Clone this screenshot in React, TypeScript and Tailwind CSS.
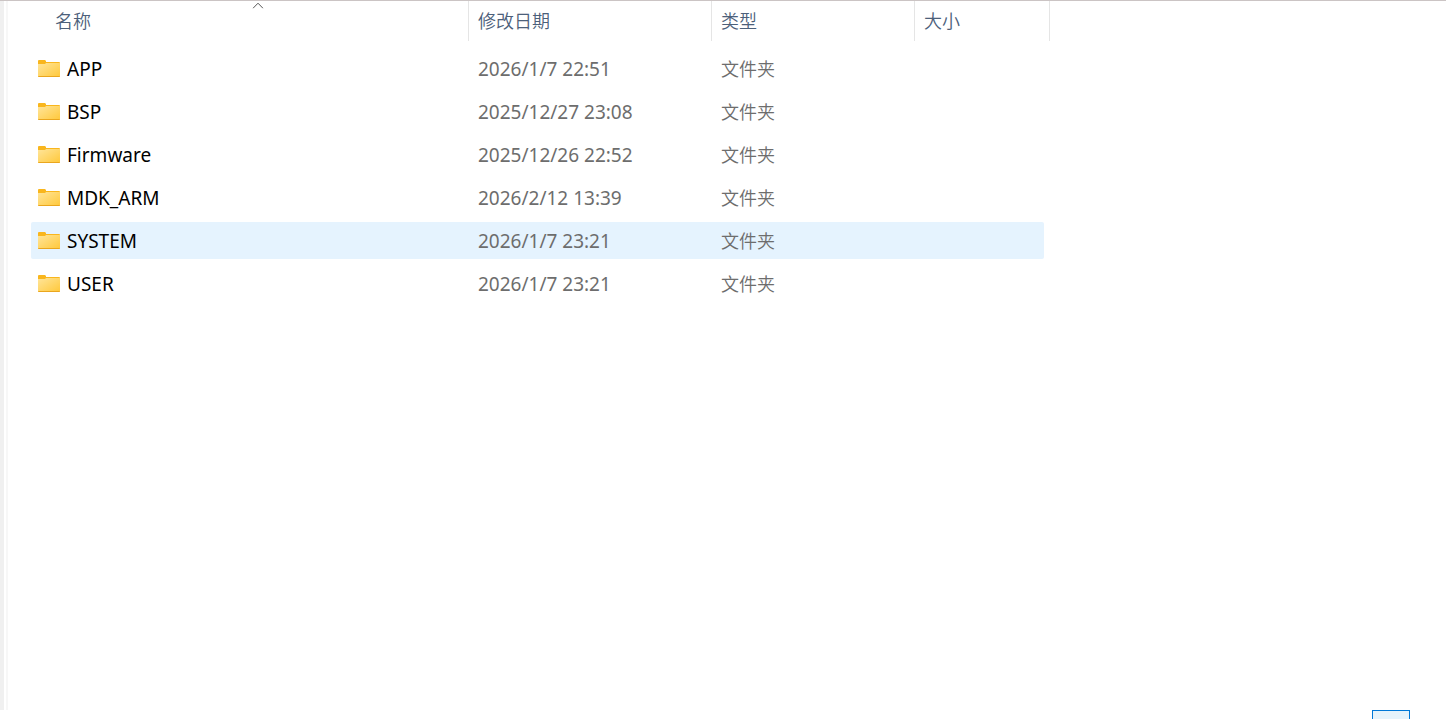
interface FolderItem {
  name: string;
  modified: string;
  type: string;
}

const folders: FolderItem[] = [
  { name: "APP", modified: "2026/1/7 22:51", type: "文件夹" },
  { name: "BSP", modified: "2025/12/27 23:08", type: "文件夹" },
  { name: "Firmware", modified: "2025/12/26 22:52", type: "文件夹" },
  { name: "MDK_ARM", modified: "2026/2/12 13:39", type: "文件夹" },
  { name: "SYSTEM", modified: "2026/1/7 23:21", type: "文件夹" },
  { name: "USER", modified: "2026/1/7 23:21", type: "文件夹" },
];

const columns = [
  { label: "名称", width: "w-[438px]", button: "ml-4 pl-2", sorted: true },
  { label: "修改日期", width: "w-[243px]", button: "pl-[9px]", sorted: false },
  { label: "类型", width: "w-[203px]", button: "pl-[9px]", sorted: false },
  { label: "大小", width: "w-[135px]", button: "pl-[9px]", sorted: false },
];

const FolderIcon = () => (
  <svg width="22" height="17" viewBox="0 0 22 17" aria-hidden="true">
    <defs>
      <linearGradient id="folder-front" x1="0" y1="0" x2="1" y2="1">
        <stop offset="0" stopColor="#ffe59a" />
        <stop offset="1" stopColor="#ffc83a" />
      </linearGradient>
    </defs>
    <path d="M0 1Q0 0 1 0H7L8 1V2H21Q22 2 22 3V8H0Z" fill="#f9b61d" />
    <path d="M0 4H7L8 3H22V16Q22 17 21 17H1Q0 17 0 16Z" fill="url(#folder-front)" />
    <path d="M0 16H22Q22 17 21 17H1Q0 17 0 16Z" fill="#eaa61e" />
  </svg>
);

const SortCaret = () => (
  <svg
    className="absolute top-px left-1/2 -translate-x-1/2"
    width="11"
    height="7"
    viewBox="0 0 11 7"
    fill="none"
    stroke="#555555"
    aria-hidden="true"
  >
    <path d="M0.5 6.3L5.5 1.2L10.5 6.3" />
  </svg>
);

const FileTable = ({ selected }: { selected: string }) => {
  const rowColor = (name: string) => (name === selected ? "bg-[#e5f3fe]" : "");

  return (
    <table className="table-fixed w-[1019px] border-separate border-spacing-0 text-left">
      <thead>
        <tr>
          {columns.map((col) => (
            <th key={col.label} className={`p-0 pb-1.5 font-normal ${col.width}`}>
              <div className="flex h-10 border-r border-[#e5e5e5]">
                <button
                  className={`relative flex-1 text-left text-lg font-[350] text-[#4c607a] ${col.button}`}
                >
                  {col.sorted && <SortCaret />}
                  {col.label}
                </button>
              </div>
            </th>
          ))}
        </tr>
      </thead>
      <tbody>
        {folders.map((item) => (
          <tr key={item.name}>
            <td className="p-0 py-[3px]">
              <div
                className={`flex h-[37px] items-center gap-[7px] rounded-l-xs pl-[7px] text-[19px] text-black ${rowColor(
                  item.name
                )}`}
              >
                <FolderIcon />
                <span className="pt-0.5">{item.name}</span>
              </div>
            </td>
            <td className="p-0 py-[3px]">
              <div
                className={`flex h-[37px] items-center pt-0.5 pl-[9px] text-[19px] text-[#6d6d6d] ${rowColor(
                  item.name
                )}`}
              >
                {item.modified}
              </div>
            </td>
            <td className="p-0 py-[3px]">
              <div
                className={`flex h-[37px] items-center pl-[9px] text-lg font-[350] text-[#6d6d6d] ${rowColor(
                  item.name
                )}`}
              >
                {item.type}
              </div>
            </td>
            <td className="p-0 py-[3px] pr-1.5">
              <div className={`h-[37px] rounded-r-xs ${rowColor(item.name)}`} />
            </td>
          </tr>
        ))}
      </tbody>
    </table>
  );
};

export default function App() {
  return (
    <div className="flex h-screen flex-col overflow-hidden bg-white font-['Noto_Sans','Noto_Sans_CJK_SC',sans-serif]">
      <div className="flex flex-1 border-t border-[#cbc4c4]">
        <div className="w-1 bg-[#f0f0f0]" />
        <div className="ml-0.5 w-0.5 bg-[#f7f7f7]" />
        <main className="flex-1 pl-[23px]">
          <FileTable selected="SYSTEM" />
        </main>
      </div>
      <footer className="flex h-[9px] justify-end pr-9">
        <button
          aria-label="详细信息"
          className="w-[38px] border border-b-0 border-[#0078d7] bg-[#e5f3fb]"
        />
      </footer>
    </div>
  );
}
